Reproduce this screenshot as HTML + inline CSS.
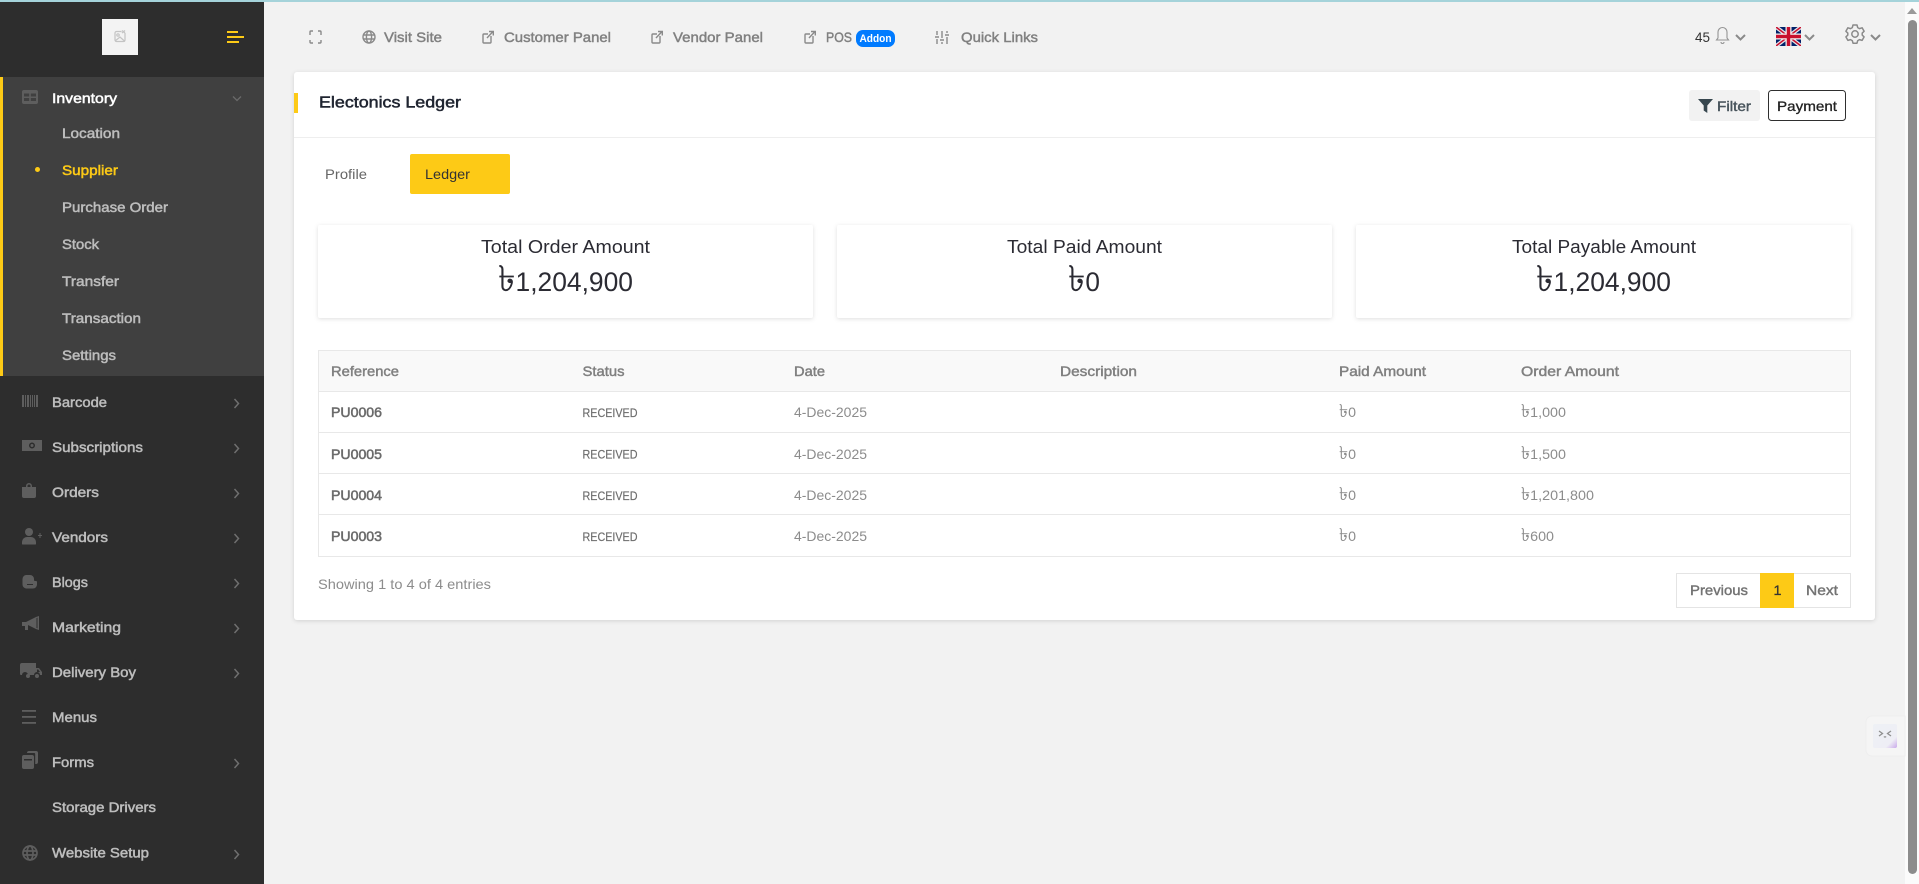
<!DOCTYPE html>
<html lang="en"><head><meta charset="utf-8"><title>Electonics Ledger</title>
<style>
html,body{margin:0;padding:0;background:#f2f2f2;overflow:hidden;width:1919px;height:884px}
svg{display:block;position:absolute;left:0;top:0}
text{font-family:"Liberation Sans","Noto Sans CJK SC","DejaVu Sans",sans-serif;font-size:14px;white-space:pre}
.sh{filter:drop-shadow(0 1px 2px rgba(0,0,0,.13))}
</style></head><body>
<svg xmlns="http://www.w3.org/2000/svg" width="1919" height="884" viewBox="0 0 1919 884">
<rect width="1919" height="884" fill="#f2f2f2"/>
<!-- scrollbar -->
<rect x="1905" y="0" width="14" height="884" fill="#fbfbfb"/>
<path d="M1907 14L1912 8L1917 14Z" fill="#9a9a9a"/>
<rect x="1908" y="20" width="9" height="854" rx="4.5" fill="#8c8c8c"/>
<!-- sidebar -->
<rect x="0" y="0" width="264" height="884" fill="#2d2d2d"/>
<rect x="0" y="77" width="264" height="299" fill="#404040"/>
<rect x="0" y="77" width="3" height="299" fill="#fdca16"/>
<rect x="102" y="19" width="36" height="36" fill="#f3f3f3"/>
<g fill="none" stroke="#c4c4c4" stroke-width="1.2"><path d="M125 33v7a1.5 1.5 0 0 1-1.500 1.500h-7a1.500 1.500 0 0 1-1.500-1.500v-7a1.500 1.500 0 0 1 1.500-1.500h5"/><circle cx="118" cy="35" r="1.200"/><path d="M115 41l5-4 5 4.500M122 33l3-2.500M125 33l-3-2.500"/></g>
<g fill="#fdca16"><rect x="227" y="31" width="11" height="2"/><rect x="227" y="36" width="17" height="2"/><rect x="227" y="41" width="12" height="2"/></g>
<!-- sidebar text -->
<g stroke-width=".5">
<text x="52" y="103" textLength="65" lengthAdjust="spacingAndGlyphs" fill="#fff" stroke="#fff">Inventory</text>
<g fill="#bdbdbd" stroke="#bdbdbd">
<text x="62" y="138" textLength="58" lengthAdjust="spacingAndGlyphs">Location</text>
<text x="62" y="212" textLength="106" lengthAdjust="spacingAndGlyphs">Purchase Order</text>
<text x="62" y="249" textLength="37" lengthAdjust="spacingAndGlyphs">Stock</text>
<text x="62" y="286" textLength="57" lengthAdjust="spacingAndGlyphs">Transfer</text>
<text x="62" y="323" textLength="79" lengthAdjust="spacingAndGlyphs">Transaction</text>
<text x="62" y="360" textLength="54" lengthAdjust="spacingAndGlyphs">Settings</text>
<text x="52" y="407" textLength="55" lengthAdjust="spacingAndGlyphs">Barcode</text>
<text x="52" y="452" textLength="91" lengthAdjust="spacingAndGlyphs">Subscriptions</text>
<text x="52" y="497" textLength="47" lengthAdjust="spacingAndGlyphs">Orders</text>
<text x="52" y="542" textLength="56" lengthAdjust="spacingAndGlyphs">Vendors</text>
<text x="52" y="587" textLength="36" lengthAdjust="spacingAndGlyphs">Blogs</text>
<text x="52" y="632" textLength="69" lengthAdjust="spacingAndGlyphs">Marketing</text>
<text x="52" y="677" textLength="84" lengthAdjust="spacingAndGlyphs">Delivery Boy</text>
<text x="52" y="722" textLength="45" lengthAdjust="spacingAndGlyphs">Menus</text>
<text x="52" y="767" textLength="42" lengthAdjust="spacingAndGlyphs">Forms</text>
<text x="52" y="812" textLength="104" lengthAdjust="spacingAndGlyphs">Storage Drivers</text>
<text x="52" y="857.500" textLength="97" lengthAdjust="spacingAndGlyphs">Website Setup</text>
</g>
<text x="62" y="175" textLength="56" lengthAdjust="spacingAndGlyphs" fill="#fdca16" stroke="#fdca16">Supplier</text>
</g>
<circle cx="37.500" cy="169.500" r="2.500" fill="#fdca16"/>
<!-- sidebar chevrons -->
<path d="M233 96.500l4 4 4-4" fill="none" stroke="#6a6a6a" stroke-width="1.300"/>
<g fill="none" stroke="#6f6f6f" stroke-width="1.500">
<path d="M234.500 399l4 4.500-4 4.500"/><path d="M234.500 444l4 4.500-4 4.500"/><path d="M234.500 489l4 4.500-4 4.500"/><path d="M234.500 534l4 4.500-4 4.500"/><path d="M234.500 579l4 4.500-4 4.500"/><path d="M234.500 624l4 4.500-4 4.500"/><path d="M234.500 669l4 4.500-4 4.500"/><path d="M234.500 759l4 4.500-4 4.500"/><path d="M234.500 850l4 4.500-4 4.500"/>
</g>
<!-- sidebar icons -->
<g fill="#5e5e5e">
<path fill-rule="evenodd" d="M24 90h12a2 2 0 0 1 2 2v10a2 2 0 0 1-2 2H24a2 2 0 0 1-2-2V92a2 2 0 0 1 2-2zM24 93.500v3h5.200v-3zM30.800 93.500v3H36v-3zM24 98v3h5.200v-3zM30.800 98v3H36v-3z"/>
<path d="M22 395h2v12h-2zM25 395h1v12h-1zM27 395h2v12h-2zM30 395h1v12h-1zM32 395h1v12h-1zM34 395h1v12h-1zM36 395h2v12h-2z"/>
<path fill-rule="evenodd" d="M22 440h20v11H22zM32 442.500a3 3 0 1 0 0 6 3 3 0 0 0 0-6zM32 444a1.500 1.500 0 1 1 0 3 1.500 1.500 0 0 1 0-3z"/>
<path d="M22 487h4v-1a3 3 0 0 1 6 0v1h4v9a2 2 0 0 1-2 2H24a2 2 0 0 1-2-2zM27.500 487h3v-1a1.500 1.500 0 0 0-3 0z" fill-rule="evenodd"/>
<circle cx="29" cy="532" r="4"/><path d="M22 544v-2a5 5 0 0 1 5-5h4a5 5 0 0 1 5 5v2a.5.500 0 0 1-.5.500h-13a.5.500 0 0 1-.5-.5z"/><path d="M38 535h1.500v-2h1v2H42v1h-1.500v2h-1v-2H38z"/>
<path fill-rule="evenodd" d="M26 575h4a4 4 0 0 1 4 4v1a1 1 0 0 0 1 1h1a1 1 0 0 1 1 1v2.500a4 4 0 0 1-4 4h-7a4 4 0 0 1-3.500-4V579a4 4 0 0 1 3.500-4zM27 584h6v1h-6z"/>
<path d="M22 622h4l10-5 3-1v14l-3-1-8-4v5h-3v-4h-3z"/><path d="M36.500 618v10l1 .4V617.600z" fill="#2d2d2d"/>
<path d="M24 663h12v5h3l3 4v3h-2a3 3 0 0 0-6 0h-6a3 3 0 0 0-6 0h-1a1 1 0 0 1-1-1v-9a2 2 0 0 1 2-2zM37 669.500v2.500h3l-1.800-2.500z" fill-rule="evenodd"/><circle cx="28" cy="676" r="2"/><circle cx="37" cy="676" r="2"/>
<rect x="22" y="710" width="14" height="1.800"/><rect x="22" y="716" width="14" height="1.800"/><rect x="22" y="722" width="14" height="1.800"/>
<path d="M22 757a2 2 0 0 1 2-2h8a2 2 0 0 1 2 2v10a2 2 0 0 1-2 2h-8a2 2 0 0 1-2-2zM24 759v1.500h8V759z" fill-rule="evenodd"/><path d="M27 753a2 2 0 0 1 2-2h7a2 2 0 0 1 2 2v9a2 2 0 0 1-2 2h-.8v-10a1 1 0 0 0-1-1H27z"/>
</g>
<g fill="none" stroke="#5e5e5e" stroke-width="1.700"><circle cx="30" cy="853" r="7"/><ellipse cx="30" cy="853" rx="3" ry="7"/><path d="M23 851h14M23 855h14"/></g>

<!-- top bar -->
<g stroke-width=".45" fill="#808080" stroke="#808080">
<text x="384" y="42" textLength="58" lengthAdjust="spacingAndGlyphs">Visit Site</text>
<text x="504" y="42" textLength="107" lengthAdjust="spacingAndGlyphs">Customer Panel</text>
<text x="673" y="42" textLength="90" lengthAdjust="spacingAndGlyphs">Vendor Panel</text>
<text x="826" y="42" textLength="26" lengthAdjust="spacingAndGlyphs">POS</text>
<text x="961" y="42" textLength="77" lengthAdjust="spacingAndGlyphs">Quick Links</text>
</g>
<rect x="856" y="30" width="39" height="17" rx="7" fill="#007bff"/>
<text x="859.500" y="42" textLength="32" lengthAdjust="spacingAndGlyphs" style="font-size:11px;font-weight:700" fill="#fff">Addon</text>
<g fill="none" stroke="#8a8a8a" stroke-width="1.400">
<path d="M310 35v-3a1 1 0 0 1 1-1h2M318 31h2a1 1 0 0 1 1 1v3M321 40v2a1 1 0 0 1-1 1h-2M313 43h-2a1 1 0 0 1-1-1v-2"/>
<circle cx="369" cy="37" r="6"/><ellipse cx="369" cy="37" rx="2.600" ry="6"/><path d="M363 35h12M363 39h12"/>
<path d="M491 36v6a1 1 0 0 1-1 1h-6a1 1 0 0 1-1-1v-7a1 1 0 0 1 1-1h4M487 38l6-6.500M489 31.500h4.300v4"/>
<path d="M660 36v6a1 1 0 0 1-1 1h-6a1 1 0 0 1-1-1v-7a1 1 0 0 1 1-1h4M656 38l6-6.500M658 31.500h4.300v4"/>
<path d="M813 36v6a1 1 0 0 1-1 1h-6a1 1 0 0 1-1-1v-7a1 1 0 0 1 1-1h4M809 38l6-6.500M811 31.500h4.300v4"/>
<path d="M937 31v4M937 39v5M942 31v7M942 42v2M947 31v2M947 37v7M935 37h4M940 40h4M945 35h4"/>
</g>
<text x="1695" y="42" textLength="15" lengthAdjust="spacingAndGlyphs" fill="#333">45</text>
<g fill="none" stroke="#949494" stroke-width="1.100"><path d="M1718 38v-6a4.500 4.500 0 0 1 9 0v6l1.500 2h-12zM1721 42a1.500 1.500 0 0 0 3 0"/></g>
<g fill="none" stroke="#8a8a8a" stroke-width="2"><path d="M1736 35l4.500 4.500 4.500-4.500"/><path d="M1805 35l4.500 4.500 4.500-4.500"/><path d="M1871 35l4.500 4.500 4.500-4.500"/></g>
<!-- flag -->
<svg x="1776" y="27" width="25" height="19" viewBox="0 0 25 19"><rect width="25" height="19" fill="#012169"/><path d="M0 0L25 19M25 0L0 19" stroke="#e6e6ea" stroke-width="4"/><path d="M0 0L25 19M25 0L0 19" stroke="#c8102e" stroke-width="1.500"/><path d="M12.500 0v19M0 9.500h25" stroke="#f4f4f4" stroke-width="6"/><path d="M12.500 0v19M0 9.500h25" stroke="#c8102e" stroke-width="3.500"/></svg>
<!-- gear -->
<g fill="none" stroke="#8a8a8a" stroke-width="1.500"><circle cx="1855" cy="34" r="3.200"/><path d="M1853 25h4l.7 2.600 1.800 1 2.600-.8 2 3.500-1.900 1.800v2l1.900 1.800-2 3.500-2.600-.8-1.800 1-.7 2.600h-4l-.7-2.600-1.800-1-2.600.8-2-3.500 1.900-1.800v-2l-1.900-1.800 2-3.500 2.600.8 1.800-1z" stroke-linejoin="round"/></g>

<!-- main card -->
<rect class="sh" x="294" y="72" width="1581" height="548" rx="3" fill="#fff"/>
<rect x="294" y="137" width="1581" height="1" fill="#eeeeee"/>
<rect x="294" y="93" width="4" height="20" fill="#fdca16"/>
<text x="319" y="107.500" textLength="142" lengthAdjust="spacingAndGlyphs" style="font-size:16px" fill="#1f2430" stroke="#1f2430" stroke-width=".5">Electonics Ledger</text>
<rect x="1689" y="90" width="71" height="31" rx="3" fill="#f2f2f2"/>
<path d="M1698 99h15l-5.700 6.500v7.500l-3.600-2.500v-5z" fill="#37474f"/>
<text x="1717" y="111" textLength="34" lengthAdjust="spacingAndGlyphs" fill="#49555d" stroke="#49555d" stroke-width=".4">Filter</text>
<rect x="1768.500" y="90.500" width="77" height="30" rx="3" fill="#fff" stroke="#2f2f2f"/>
<text x="1777" y="111" textLength="60" lengthAdjust="spacingAndGlyphs" fill="#222" stroke="#222" stroke-width=".3">Payment</text>
<!-- tabs -->
<text x="325" y="179" textLength="42" lengthAdjust="spacingAndGlyphs" fill="#666">Profile</text>
<rect x="410" y="154" width="100" height="40" rx="2" fill="#fdca16"/>
<text x="425" y="179" textLength="45" lengthAdjust="spacingAndGlyphs" fill="#333">Ledger</text>
<!-- stat cards -->
<g fill="#fff">
<rect class="sh" x="318" y="225" width="495" height="93" rx="2"/>
<rect class="sh" x="837" y="225" width="495" height="93" rx="2"/>
<rect class="sh" x="1356" y="225" width="495" height="93" rx="2"/>
</g>
<g fill="#2b2b33">
<text x="481" y="253" textLength="169" lengthAdjust="spacingAndGlyphs" style="font-size:18px">Total Order Amount</text>
<text x="1007" y="253" textLength="155" lengthAdjust="spacingAndGlyphs" style="font-size:18px">Total Paid Amount</text>
<text x="1512" y="253" textLength="184" lengthAdjust="spacingAndGlyphs" style="font-size:18px">Total Payable Amount</text>
<text x="498" y="291" textLength="135" lengthAdjust="spacingAndGlyphs" style="font-size:27px"><tspan style="font-size:36px">৳</tspan>1,204,900</text>
<text x="1068" y="291" textLength="32" lengthAdjust="spacingAndGlyphs" style="font-size:27px"><tspan style="font-size:36px">৳</tspan>0</text>
<text x="1536" y="291" textLength="135" lengthAdjust="spacingAndGlyphs" style="font-size:27px"><tspan style="font-size:36px">৳</tspan>1,204,900</text>
</g>
<!-- table -->
<rect x="318.500" y="350.500" width="1532" height="206" fill="#fff" stroke="#e8e8e8"/>
<rect x="319" y="351" width="1531" height="41" fill="#f9f9f9"/>
<g fill="#e8e8e8"><rect x="319" y="391" width="1531" height="1"/><rect x="319" y="432" width="1531" height="1"/><rect x="319" y="473" width="1531" height="1"/><rect x="319" y="514" width="1531" height="1"/></g>
<g fill="#808080" stroke="#808080" stroke-width=".45">
<text x="331" y="376" textLength="68" lengthAdjust="spacingAndGlyphs">Reference</text>
<text x="582.500" y="376" textLength="42" lengthAdjust="spacingAndGlyphs">Status</text>
<text x="794" y="376" textLength="31" lengthAdjust="spacingAndGlyphs">Date</text>
<text x="1060" y="376" textLength="77" lengthAdjust="spacingAndGlyphs">Description</text>
<text x="1339" y="376" textLength="87" lengthAdjust="spacingAndGlyphs">Paid Amount</text>
<text x="1521" y="376" textLength="98" lengthAdjust="spacingAndGlyphs">Order Amount</text>
</g>
<g fill="#6b6b6b" stroke="#6b6b6b" stroke-width=".55">
<text x="331" y="417" textLength="51" lengthAdjust="spacingAndGlyphs">PU0006</text>
<text x="331" y="459" textLength="51" lengthAdjust="spacingAndGlyphs">PU0005</text>
<text x="331" y="500" textLength="51" lengthAdjust="spacingAndGlyphs">PU0004</text>
<text x="331" y="541" textLength="51" lengthAdjust="spacingAndGlyphs">PU0003</text>
</g>
<g fill="#6e6e6e" stroke="#6e6e6e" stroke-width=".2">
<text x="582.500" y="417" textLength="55" lengthAdjust="spacingAndGlyphs" style="font-size:12px">RECEIVED</text>
<text x="582.500" y="458.500" textLength="55" lengthAdjust="spacingAndGlyphs" style="font-size:12px">RECEIVED</text>
<text x="582.500" y="500" textLength="55" lengthAdjust="spacingAndGlyphs" style="font-size:12px">RECEIVED</text>
<text x="582.500" y="541" textLength="55" lengthAdjust="spacingAndGlyphs" style="font-size:12px">RECEIVED</text>
</g>
<g fill="#8c8c8c">
<text x="794" y="417" textLength="73" lengthAdjust="spacingAndGlyphs">4-Dec-2025</text>
<text x="794" y="459" textLength="73" lengthAdjust="spacingAndGlyphs">4-Dec-2025</text>
<text x="794" y="500" textLength="73" lengthAdjust="spacingAndGlyphs">4-Dec-2025</text>
<text x="794" y="541" textLength="73" lengthAdjust="spacingAndGlyphs">4-Dec-2025</text>
<text x="1339" y="417" textLength="17" lengthAdjust="spacingAndGlyphs"><tspan style="font-size:18px">৳</tspan>0</text>
<text x="1339" y="459" textLength="17" lengthAdjust="spacingAndGlyphs"><tspan style="font-size:18px">৳</tspan>0</text>
<text x="1339" y="500" textLength="17" lengthAdjust="spacingAndGlyphs"><tspan style="font-size:18px">৳</tspan>0</text>
<text x="1339" y="541" textLength="17" lengthAdjust="spacingAndGlyphs"><tspan style="font-size:18px">৳</tspan>0</text>
<text x="1521" y="417" textLength="45" lengthAdjust="spacingAndGlyphs"><tspan style="font-size:18px">৳</tspan>1,000</text>
<text x="1521" y="459" textLength="45" lengthAdjust="spacingAndGlyphs"><tspan style="font-size:18px">৳</tspan>1,500</text>
<text x="1521" y="500" textLength="73" lengthAdjust="spacingAndGlyphs"><tspan style="font-size:18px">৳</tspan>1,201,800</text>
<text x="1521" y="541" textLength="33" lengthAdjust="spacingAndGlyphs"><tspan style="font-size:18px">৳</tspan>600</text>
<text x="318" y="589" textLength="173" lengthAdjust="spacingAndGlyphs">Showing 1 to 4 of 4 entries</text>
</g>
<!-- pagination -->
<rect x="1676.500" y="573.500" width="174" height="34" fill="#fff" stroke="#e4e4e4"/>
<rect x="1760" y="573" width="34" height="35" fill="#fdca16"/>
<g fill="#737373" stroke="#737373" stroke-width=".4">
<text x="1690" y="595" textLength="58" lengthAdjust="spacingAndGlyphs">Previous</text>
<text x="1806" y="595" textLength="32" lengthAdjust="spacingAndGlyphs">Next</text>
</g>
<text x="1773.500" y="595" textLength="8" lengthAdjust="spacingAndGlyphs" fill="#333" stroke="#333" stroke-width=".3">1</text>
<!-- floating widget -->
<path d="M1905 716h-33a6 6 0 0 0-6 6v28a6 6 0 0 0 6 6h33z" fill="#f5f5f5" stroke="#eeeeee"/>
<defs><linearGradient id="g" x1="0" y1="0" x2="1" y2="1"><stop offset="0" stop-color="#eef1f5"/><stop offset=".75" stop-color="#eeeef5"/><stop offset="1" stop-color="#c9a8ea"/></linearGradient></defs>
<rect x="1873" y="724" width="24" height="24" rx="2" fill="url(#g)"/>
<g fill="none" stroke="#8f8f8f" stroke-width="1.300"><path d="M1879 731l3.500 2.500-3.500 2.500M1891 731l-3.500 2.500 3.500 2.500M1884 736.500a1.200 1.200 0 0 0 2 0"/></g>
<rect x="0" y="0" width="1919" height="2" fill="#a5d3da"/>
</svg>
</body></html>
